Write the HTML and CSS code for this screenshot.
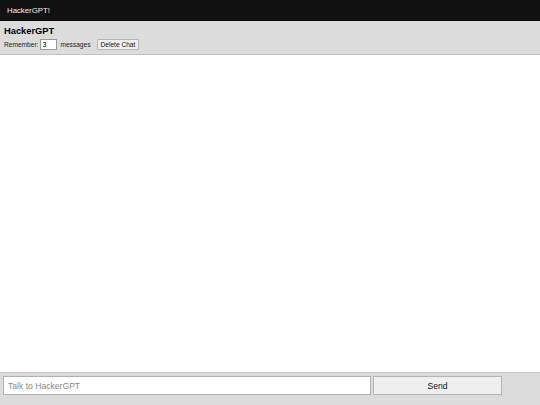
FILE: index.html
```html
<!DOCTYPE html>
<html>
<head>
<meta charset="utf-8">
<link rel="stylesheet" href="styles.css">
</head>
<body>
<div class="app">
  <div class="topbar">HackerGPT!</div>
  <div class="header">
    <div class="title">HackerGPT</div>
    <div class="controls">
      <span>Remember:</span>
      <input class="num" type="text" value="3">
      <span>messages</span>
      <button class="del">Delete Chat</button>
    </div>
  </div>
  <div class="messages"></div>
  <div class="footer">
    <input class="prompt" type="text" placeholder="Talk to HackerGPT">
    <button class="send">Send</button>
  </div>
</div>
</body>
</html>
```
FILE: styles.css
```css
html, body {
  margin: 0;
  padding: 0;
  height: 100%;
}
body {
  font-family: "Liberation Sans", Arial, sans-serif;
  background: #fff;
}
.app {
  display: flex;
  flex-direction: column;
  height: 405px;
}
.topbar {
  background: #111;
  color: #f2f2f2;
  font-size: 7.8px;
  height: 21px;
  line-height: 21px;
  padding-left: 7px;
  flex: none;
}
.header {
  background: #dcdcdc;
  border-bottom: 1px solid #c4c4c4;
  padding: 4px 4px 4px 4px;
  flex: none;
  height: 25px;
}
.title {
  font-weight: bold;
  font-size: 9.3px;
  color: #000;
  line-height: 12px;
}
.controls {
  display: flex;
  align-items: center;
  font-size: 6.6px;
  color: #222;
  margin-top: 2px;
  gap: 2px;
}
.num {
  width: 13px;
  height: 9px;
  font-size: 7px;
  padding: 0 1px;
  border: 1px solid #9a9a9a;
  font-family: inherit;
  margin: 0 1px 0 0;
}
.del {
  font-family: inherit;
  font-size: 6.6px;
  height: 11px;
  padding: 0 3px;
  margin-left: 4px;
  background: #efefef;
  border: 1px solid #b5b5b5;
  border-radius: 1px;
  color: #111;
  line-height: 9px;
}
.messages {
  flex: 1;
  background: #fff;
}
.footer {
  flex: none;
  background: #dcdcdc;
  border-top: 1px solid #c4c4c4;
  display: flex;
  align-items: flex-start;
  padding: 3px 0 0 3px;
  box-sizing: border-box;
  height: 33px;
  gap: 2px;
}
.prompt {
  width: 368px;
  height: 19px;
  box-sizing: border-box;
  border: 1px solid #b0b0b0;
  font-family: inherit;
  font-size: 8.6px;
  padding: 0 4px;
  margin: 0;
  background: #fff;
  color: #333;
}
.prompt::placeholder {
  color: #8a8a8a;
}
.send {
  width: 129px;
  height: 19px;
  box-sizing: border-box;
  border: 1px solid #b5b5b5;
  background: #efefef;
  font-family: inherit;
  font-size: 8.6px;
  margin: 0;
  color: #111;
}
```
